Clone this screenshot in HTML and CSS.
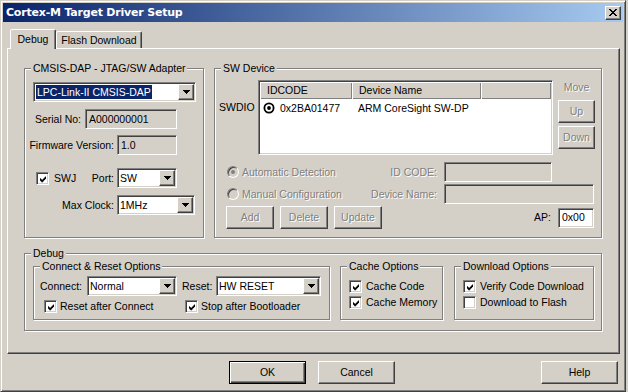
FILE: index.html
```html
<!DOCTYPE html>
<html lang="en">
<head>
  <meta charset="UTF-8">
  <title>Cortex-M Target Driver Setup</title>
  <link rel="stylesheet" href="styles.css">
</head>
<body>
  <div class="window">
    <div class="title-bar">
      <span class="title">Cortex-M Target Driver Setup</span>
      <div class="close-btn raised">
        <svg width="8" height="7" viewBox="0 0 8 7"><path d="M0 0h2v1H0zM6 0h2v1H6zM1 1h2v1H1zM5 1h2v1H5zM2 2h4v1H2zM3 3h2v1H3zM2 4h4v1H2zM1 5h2v1H1zM5 5h2v1H5zM0 6h2v1H0zM6 6h2v1H6z"/></svg>
      </div>
    </div>

    <div class="tabs">
      <div class="tab tab-active">Debug</div>
      <div class="tab">Flash Download</div>
    </div>

    <div class="panel">
      <div class="top-row">
        <!-- adapter -->
        <div class="group adapter">
          <div class="legend">CMSIS-DAP - JTAG/SW Adapter</div>
          <div class="combo combo-adapter">
            <span class="combo-val"><span class="sel">LPC-Link-II CMSIS-DAP</span></span>
            <span class="combo-btn raised"><svg width="7" height="4" viewBox="0 0 7 4"><path d="M0 0h7v1H0zM1 1h5v1H1zM2 2h3v1H2zM3 3h1v1H3z"/></svg></span>
          </div>
          <div class="row row-serial">
            <span class="lbl lbl-serial">Serial No:</span>
            <span class="field field-serial">A000000001</span>
          </div>
          <div class="row row-fw">
            <span class="lbl lbl-wide">Firmware Version:</span>
            <span class="field field-fw">1.0</span>
          </div>
          <div class="row row-swj">
            <div class="lbl-wide swj-box">
              <span class="check"><svg width="7" height="7" viewBox="0 0 7 7"><path d="M6 0h1v1H6zM5 1h2v1H5zM0 2h1v1H0zM4 2h3v1H4zM0 3h2v1H0zM3 3h3v1H3zM0 4h5v1H0zM1 5h3v1H1zM2 6h1v1H2z"/></svg></span>
              <span class="swj-text">SWJ</span>
              <span class="port-lbl">Port:</span>
            </div>
            <div class="combo combo-port">
              <span class="combo-val">SW</span>
              <span class="combo-btn raised"><svg width="7" height="4" viewBox="0 0 7 4"><path d="M0 0h7v1H0zM1 1h5v1H1zM2 2h3v1H2zM3 3h1v1H3z"/></svg></span>
            </div>
          </div>
          <div class="row row-clock">
            <span class="lbl lbl-wide">Max Clock:</span>
            <div class="combo combo-clock">
              <span class="combo-val">1MHz</span>
              <span class="combo-btn raised"><svg width="7" height="4" viewBox="0 0 7 4"><path d="M0 0h7v1H0zM1 1h5v1H1zM2 2h3v1H2zM3 3h1v1H3z"/></svg></span>
            </div>
          </div>
        </div>

        <!-- sw device -->
        <div class="group sw-device">
          <div class="legend">SW Device</div>
          <div class="sw-top">
            <div class="swdio">SWDIO</div>
            <div class="list sunken">
              <div class="list-head">
                <span class="head-cell c1">IDCODE</span>
                <span class="head-cell c2">Device Name</span>
                <span class="head-cell c3"></span>
              </div>
              <div class="list-row">
                <span class="c1 cell-id">
                  <svg width="12" height="12" viewBox="0 0 12 12"><circle cx="6" cy="6" r="4.6" fill="none" stroke="#000" stroke-width="1.8"/><circle cx="6" cy="6" r="1.9"/></svg>
                  <span class="id-text">0x2BA01477</span>
                </span>
                <span class="c2 cell-name">ARM CoreSight SW-DP</span>
              </div>
            </div>
            <div class="move-col">
              <div class="move-lbl dis">Move</div>
              <button class="btn btn-move" disabled><span class="dis">Up</span></button>
              <button class="btn btn-move btn-down" disabled><span class="dis">Down</span></button>
            </div>
          </div>

          <div class="sw-row sw-row-1">
            <div class="sw-left">
              <span class="radio radio-on"></span>
              <span class="dis opt-text">Automatic Detection</span>
              <span class="dis sw-lbl">ID CODE:</span>
            </div>
            <span class="field field-id"></span>
          </div>
          <div class="sw-row sw-row-2">
            <div class="sw-left">
              <span class="radio"></span>
              <span class="dis opt-text">Manual Configuration</span>
              <span class="dis sw-lbl">Device Name:</span>
            </div>
            <span class="field field-name"></span>
          </div>
          <div class="sw-row sw-row-3">
            <button class="btn btn-sm" disabled><span class="dis">Add</span></button>
            <button class="btn btn-sm" disabled><span class="dis">Delete</span></button>
            <button class="btn btn-sm" disabled><span class="dis">Update</span></button>
            <span class="ap-lbl">AP:</span>
            <span class="field field-ap">0x00</span>
          </div>
        </div>
      </div>

      <!-- debug -->
      <div class="group debug-group">
        <div class="legend">Debug</div>
        <div class="debug-row">
          <div class="group conn-group">
            <div class="legend">Connect &amp; Reset Options</div>
            <div class="conn-row">
              <span class="lbl-connect">Connect:</span>
              <div class="combo combo-connect">
                <span class="combo-val">Normal</span>
                <span class="combo-btn raised"><svg width="7" height="4" viewBox="0 0 7 4"><path d="M0 0h7v1H0zM1 1h5v1H1zM2 2h3v1H2zM3 3h1v1H3z"/></svg></span>
              </div>
              <span class="lbl-reset">Reset:</span>
              <div class="combo combo-reset">
                <span class="combo-val">HW RESET</span>
                <span class="combo-btn raised"><svg width="7" height="4" viewBox="0 0 7 4"><path d="M0 0h7v1H0zM1 1h5v1H1zM2 2h3v1H2zM3 3h1v1H3z"/></svg></span>
              </div>
            </div>
            <div class="conn-checks">
              <div class="check-item check-first">
                <span class="check"><svg width="7" height="7" viewBox="0 0 7 7"><path d="M6 0h1v1H6zM5 1h2v1H5zM0 2h1v1H0zM4 2h3v1H4zM0 3h2v1H0zM3 3h3v1H3zM0 4h5v1H0zM1 5h3v1H1zM2 6h1v1H2z"/></svg></span>
                <span class="check-text">Reset after Connect</span>
              </div>
              <div class="check-item">
                <span class="check"><svg width="7" height="7" viewBox="0 0 7 7"><path d="M6 0h1v1H6zM5 1h2v1H5zM0 2h1v1H0zM4 2h3v1H4zM0 3h2v1H0zM3 3h3v1H3zM0 4h5v1H0zM1 5h3v1H1zM2 6h1v1H2z"/></svg></span>
                <span class="check-text">Stop after Bootloader</span>
              </div>
            </div>
          </div>

          <div class="group cache-group">
            <div class="legend">Cache Options</div>
            <div class="check-list">
              <div class="check-row">
                <span class="check"><svg width="7" height="7" viewBox="0 0 7 7"><path d="M6 0h1v1H6zM5 1h2v1H5zM0 2h1v1H0zM4 2h3v1H4zM0 3h2v1H0zM3 3h3v1H3zM0 4h5v1H0zM1 5h3v1H1zM2 6h1v1H2z"/></svg></span>
                <span class="check-label">Cache Code</span>
              </div>
              <div class="check-row">
                <span class="check"><svg width="7" height="7" viewBox="0 0 7 7"><path d="M6 0h1v1H6zM5 1h2v1H5zM0 2h1v1H0zM4 2h3v1H4zM0 3h2v1H0zM3 3h3v1H3zM0 4h5v1H0zM1 5h3v1H1zM2 6h1v1H2z"/></svg></span>
                <span class="check-label">Cache Memory</span>
              </div>
            </div>
          </div>

          <div class="group dl-group">
            <div class="legend">Download Options</div>
            <div class="check-list">
              <div class="check-row">
                <span class="check"><svg width="7" height="7" viewBox="0 0 7 7"><path d="M6 0h1v1H6zM5 1h2v1H5zM0 2h1v1H0zM4 2h3v1H4zM0 3h2v1H0zM3 3h3v1H3zM0 4h5v1H0zM1 5h3v1H1zM2 6h1v1H2z"/></svg></span>
                <span class="check-label">Verify Code Download</span>
              </div>
              <div class="check-row">
                <span class="check"></span>
                <span class="check-label">Download to Flash</span>
              </div>
            </div>
          </div>
        </div>
      </div>
    </div>

    <div class="dialog-buttons">
      <button class="btn btn-dlg btn-default">OK</button>
      <button class="btn btn-dlg btn-cancel">Cancel</button>
      <button class="btn btn-dlg btn-help">Help</button>
    </div>
  </div>
</body>
</html>
```

FILE: styles.css
```css
* {
  box-sizing: border-box;
}

body {
  margin: 0;
  background: #d4d0c8;
  font-family: "Liberation Sans", Arial, sans-serif;
  font-size: 10.5px;
  line-height: 13px;
  color: #000;
}

/* 3D edges */
.raised {
  border: 1px solid;
  border-color: #fff #404040 #404040 #fff;
  box-shadow: inset -1px -1px 0 #808080;
  background: #d4d0c8;
}

.sunken {
  border: 1px solid;
  border-color: #808080 #fff #fff #808080;
  box-shadow: inset 1px 1px 0 #404040, inset -1px -1px 0 #d4d0c8;
}

.dis {
  color: #808080;
  text-shadow: 1px 1px 0 #fff;
}

/* window frame */
.window {
  width: 626px;
  height: 392px;
  border: 1px solid;
  border-color: #d4d0c8 #404040 #404040 #d4d0c8;
  padding: 2px;
  box-shadow: inset 1px 1px 0 #fff, inset -1px -1px 0 #808080;
}

.title-bar {
  height: 19px;
  display: flex;
  align-items: center;
  padding: 0 2px 0 3px;
  background: linear-gradient(to right, #0a246a, #a6caf0);
}

.title {
  flex: 1;
  color: #fff;
  font-family: "DejaVu Sans", sans-serif;
  font-weight: bold;
  font-size: 11px;
  letter-spacing: -0.2px;
}

.close-btn {
  width: 16px;
  height: 14px;
  display: flex;
  align-items: center;
  justify-content: center;
}

/* tabs */
.tabs {
  position: relative;
  z-index: 1;
  display: flex;
  align-items: flex-end;
  height: 19px;
  margin-top: 7px;
  padding-left: 7px;
}

.tab {
  height: 17px;
  padding-top: 2px;
  text-align: center;
  border: 1px solid;
  border-bottom: 0;
  border-color: #fff #404040 transparent #fff;
  border-radius: 2px 2px 0 0;
  box-shadow: inset -1px 0 0 #808080;
  background: #d4d0c8;
  width: 86px;
}

.tab-active {
  width: 46px;
  height: 20px;
  padding-top: 3px;
  margin-bottom: -1px;
}

.panel {
  width: 613px;
  height: 306px;
  margin-left: 4px;
  padding: 19px 0 0 16px;
  border: 1px solid;
  border-color: #fff #404040 #404040 #fff;
  box-shadow: inset -1px -1px 0 #808080;
}

/* group boxes */
.group {
  border: 1px solid #808080;
  box-shadow: inset 1px 1px 0 #fff, 1px 1px 0 #fff;
}

.legend {
  width: max-content;
  height: 13px;
  margin: -7px 0 -6px 6px;
  padding: 0 2px;
  background: #d4d0c8;
}

.top-row {
  display: flex;
  gap: 10px;
}

/* edit boxes and combos */
.field {
  display: flex;
  align-items: center;
  height: 20px;
  padding-left: 3px;
  border: 1px solid;
  border-color: #808080 #fff #fff #808080;
  box-shadow: inset 1px 1px 0 #404040, inset -1px -1px 0 #d4d0c8;
  background: #d4d0c8;
}

.combo {
  display: flex;
  align-items: center;
  height: 20px;
  padding: 1px;
  border: 1px solid;
  border-color: #808080 #fff #fff #808080;
  box-shadow: inset 1px 1px 0 #404040, inset -1px -1px 0 #d4d0c8;
  background: #fff;
}

.combo-val {
  flex: 1;
  padding-left: 1px;
  white-space: nowrap;
}

.combo-val .sel {
  display: inline-block;
  height: 14px;
  line-height: 14px;
  padding: 0 1px;
  background: #0a246a;
  color: #fff;
}

.combo-btn {
  width: 16px;
  height: 16px;
  display: flex;
  align-items: center;
  justify-content: center;
}

.check {
  display: flex;
  align-items: flex-start;
  width: 13px;
  height: 13px;
  padding: 2px;
  border: 1px solid;
  border-color: #808080 #fff #fff #808080;
  box-shadow: inset 1px 1px 0 #404040, inset -1px -1px 0 #d4d0c8;
  background: #fff;
  flex: none;
}

.check svg {
  margin: 1px 0 0 1px;
}

.radio {
  display: flex;
  align-items: center;
  justify-content: center;
  width: 12px;
  height: 12px;
  border-radius: 50%;
  border: 1px solid;
  border-color: #808080 #fff #fff #808080;
  box-shadow: inset 1px 1px 0 #404040, inset -1px -1px 0 #d4d0c8;
  background: #d4d0c8;
  flex: none;
}

.radio-on::after {
  content: "";
  width: 4px;
  height: 4px;
  border-radius: 50%;
  background: #808080;
}

/* buttons */
.btn {
  display: flex;
  align-items: center;
  justify-content: center;
  margin: 0;
  padding: 0;
  font: inherit;
  color: #000;
  border: 1px solid;
  border-color: #fff #404040 #404040 #fff;
  box-shadow: inset -1px -1px 0 #808080;
  background: #d4d0c8;
}

/* adapter group */
.adapter {
  width: 180px;
  height: 170px;
}

.combo-adapter {
  width: 163px;
  margin: 13px 0 0 8px;
}

.row {
  display: flex;
  align-items: center;
  height: 20px;
}

.lbl {
  text-align: right;
}

.lbl-serial {
  width: 60px;
  padding-right: 4px;
}

.lbl-wide {
  width: 92px;
  padding-right: 3px;
}

.row-serial {
  margin-top: 7px;
}

.field-serial {
  width: 92px;
}

.row-fw {
  margin-top: 6px;
}

.field-fw {
  width: 60px;
}

.row-swj {
  margin-top: 13px;
}

.swj-box {
  display: flex;
  align-items: center;
  padding-left: 11px;
}

.swj-text {
  margin-left: 5px;
}

.port-lbl {
  margin-left: auto;
}

.combo-port {
  width: 60px;
}

.row-clock {
  margin-top: 7px;
}

.combo-clock {
  width: 78px;
}

/* sw device group */
.sw-device {
  width: 388px;
  height: 170px;
}

.sw-top {
  display: flex;
}

.swdio {
  width: 43px;
  padding: 32px 0 0 4px;
}

.list {
  width: 295px;
  height: 75px;
  margin-top: 11px;
  padding: 1px;
  background: #fff;
}

.list-head {
  display: flex;
  height: 17px;
}

.head-cell {
  display: flex;
  align-items: center;
  padding-left: 7px;
  background: #d4d0c8;
  box-shadow: inset 1px 1px 0 #fff, inset -1px -1px 0 #808080;
}

.c1 {
  width: 92px;
}

.c2 {
  width: 129px;
}

.c3 {
  flex: 1;
}

.list-row {
  display: flex;
  align-items: center;
  height: 18px;
}

.cell-id {
  display: flex;
  align-items: center;
  padding-left: 3px;
}

.id-text {
  margin-left: 5px;
}

.cell-name {
  padding-left: 6px;
  white-space: nowrap;
}

.move-col {
  width: 37px;
  margin-left: 5px;
}

.move-lbl {
  margin-top: 12px;
  text-align: center;
}

.btn-move {
  width: 37px;
  height: 23px;
  margin-top: 6px;
}

.btn-down {
  margin-top: 3px;
}

.sw-row {
  display: flex;
  align-items: center;
}

.sw-row-1 {
  height: 20px;
  margin-top: 7px;
}

.sw-row-2 {
  height: 20px;
  margin-top: 2px;
}

.sw-row-3 {
  height: 23px;
  margin-top: 2px;
  padding: 0 7px 0 11px;
}

.sw-left {
  display: flex;
  align-items: center;
  width: 222px;
  padding-left: 12px;
}

.opt-text {
  margin-left: 3px;
}

.sw-lbl {
  margin-left: auto;
}

.field-id {
  width: 108px;
  margin-left: 7px;
}

.field-name {
  width: 150px;
  margin-left: 7px;
}

.btn-sm {
  width: 48px;
  height: 23px;
  margin-right: 6px;
}

.ap-lbl {
  margin-left: auto;
}

.field-ap {
  width: 36px;
  margin-left: 7px;
  background: #fff;
}

/* debug group */
.debug-group {
  width: 578px;
  height: 78px;
  margin-top: 15px;
}

.debug-row {
  display: flex;
  margin: 12px 0 0 8px;
}

.conn-group {
  width: 297px;
  height: 54px;
}

.cache-group {
  width: 103px;
  height: 54px;
  margin-left: 10px;
}

.dl-group {
  width: 140px;
  height: 54px;
  margin-left: 11px;
}

.conn-row {
  display: flex;
  align-items: center;
  height: 20px;
  margin-top: 9px;
  padding-left: 6px;
}

.lbl-connect {
  width: 47px;
}

.combo-connect {
  width: 90px;
}

.lbl-reset {
  width: 34px;
  margin-left: 5px;
}

.combo-reset {
  width: 105px;
}

.conn-checks {
  display: flex;
  margin-top: 4px;
  padding-left: 10px;
}

.check-item {
  display: flex;
  align-items: center;
}

.check-first {
  width: 141px;
}

.check-text {
  margin-left: 3px;
  white-space: nowrap;
}

.check-list {
  margin-top: 11px;
  padding-left: 8px;
}

.check-row {
  display: flex;
  align-items: center;
  height: 16px;
}

.check-label {
  margin-left: 4px;
  white-space: nowrap;
}

/* dialog buttons */
.dialog-buttons {
  display: flex;
  margin-top: 7px;
  padding: 0 5px 0 226px;
}

.btn-dlg {
  width: 77px;
  height: 23px;
}

.btn-default {
  border-color: #000;
  box-shadow: inset 1px 1px 0 #fff, inset -1px -1px 0 #404040, inset -2px -2px 0 #808080;
}

.btn-cancel {
  margin-left: 12px;
}

.btn-help {
  margin-left: auto;
}
```
